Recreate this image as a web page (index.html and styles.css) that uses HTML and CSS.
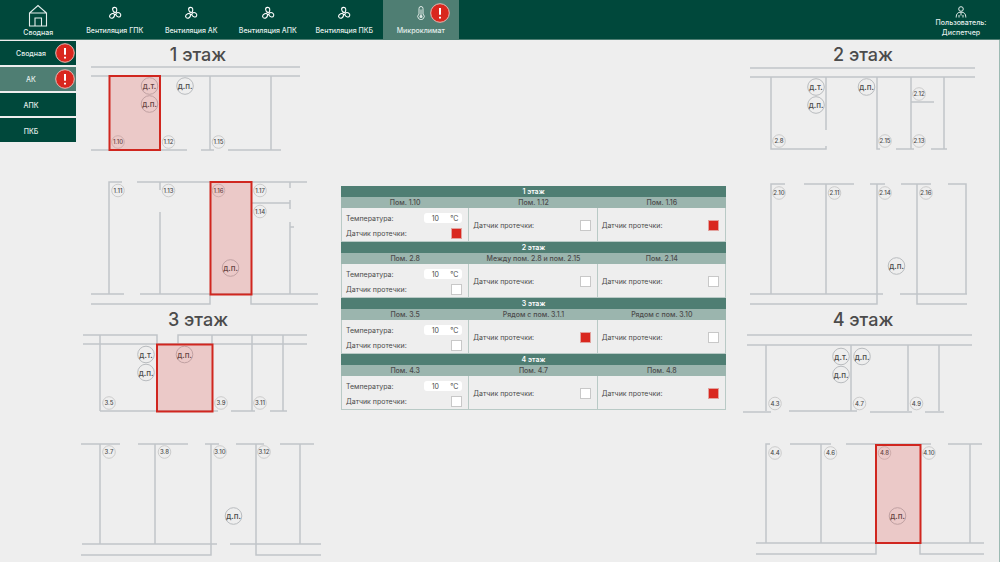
FILE: index.html
```html
<!DOCTYPE html>
<html lang="ru">
<head>
<meta charset="utf-8">
<title>Микроклимат — АК</title>
<link rel="stylesheet" href="styles.css">
</head>
<body>
<svg class="defs" aria-hidden="true">
  <symbol id="fan" viewBox="0 0 14 14">
    <g fill="none" stroke="#fff" stroke-width="1.1" stroke-linejoin="round">
      <circle cx="7" cy="7.4" r="1.2"/>
      <path d="M6.6 6.2C4.2 5.2 3.8 1.6 6.4 1.4C9 1.2 9.4 4 8 6.6"/>
      <path d="M8.2 7.2C10.4 5.6 13.4 7.2 12.7 9.6C12 12 8.8 11.2 7.6 8.6"/>
      <path d="M6.6 8.5C6.7 11.4 4 13.2 2.2 11.6C.4 9.8 2.6 7.4 5.8 7.2"/>
    </g>
  </symbol>
</svg>

<header class="topbar">
  <nav class="tabs">
    <button class="tab tab-home">
      <svg class="icon-home" viewBox="0 0 20 23"><path d="M1.5 22V9L10 1.5L18.500 9V22ZM1.5 9H18.500M7 22V14H13.500V22" fill="none" stroke="#e4eeec" stroke-width="1.1"/></svg>
      <span>Сводная</span>
    </button>
    <button class="tab"><svg class="icon"><use href="#fan"/></svg><span>Вентиляция ГПК</span></button>
    <button class="tab"><svg class="icon"><use href="#fan"/></svg><span>Вентиляция АК</span></button>
    <button class="tab"><svg class="icon"><use href="#fan"/></svg><span>Вентиляция АПК</span></button>
    <button class="tab"><svg class="icon"><use href="#fan"/></svg><span>Вентиляция ПКБ</span></button>
    <button class="tab active">
      <svg class="icon" viewBox="0 0 14 14"><path d="M5 8V2.500A2 2 0 0 1 9 2.500V8A3.200 3.200 0 1 1 5 8Z" fill="none" stroke="#dfeae7"/><path d="M7 3.500V10" stroke="#dfeae7" stroke-width="1"/><circle cx="7" cy="10.500" r="1.500" fill="#dfeae7"/></svg>
      <span>Микроклимат</span>
      <svg class="alarm alarm-tab" viewBox="0 0 20 20"><circle cx="10" cy="10" r="9.300"/><path d="M10 5V11.800M10 13.800V15.600"/></svg>
    </button>
  </nav>
  <div class="user">
    <svg class="icon-user" viewBox="0 0 12 12"><g fill="none" stroke="#e4eeec"><circle cx="6" cy="3" r="2.300"/><path d="M1.200 11.500C1.200 7.500 3 6.200 6 6.200S10.800 7.500 10.800 11.500M4 11.500V9M8 11.500V9M6 6.500V9.500"/></g></svg>
    <span>Пользователь:</span>
    <span>Диспетчер</span>
  </div>
</header>

<div class="page">
  <nav class="side">
    <button class="side-item">Сводная<svg class="alarm alarm-side" viewBox="0 0 20 20"><circle cx="10" cy="10" r="9.300"/><path d="M10 5V11.800M10 13.800V15.600"/></svg></button>
    <button class="side-item active">АК<svg class="alarm alarm-side" viewBox="0 0 20 20"><circle cx="10" cy="10" r="9.300"/><path d="M10 5V11.800M10 13.800V15.600"/></svg></button>
    <button class="side-item">АПК</button>
    <button class="side-item">ПКБ</button>
  </nav>

  <main class="main">
    <div class="plans plans-left">
      <section>
        <h2>1 этаж</h2>
        <svg class="plan" viewBox="77 66 264 239">
          <path class="wall" d="M91 67H300M91 76H300M210 76V150M271 76V150M91 150H187M201 150H214M228 150H281"/>
          <path class="wall" d="M122 182H109V294M137 182H307M160 182V190M160 212V294M290 182V188M290 200V209M290 222V294M290 227H294M251 203H290M91 294H124M140 294H318M91 304H210V294M251 294V304H318"/>
          <g class="sensor">
            <circle cx="149.500" cy="86" r="8.300"/><text x="149.500" y="89">д.т.</text>
            <circle cx="149.500" cy="104" r="8.300"/><text x="149.500" y="107">д.п.</text>
            <circle cx="185" cy="86" r="8.300"/><text x="185" y="89">д.п.</text>
            <circle cx="230.500" cy="268" r="8.300"/><text x="230.500" y="271">д.п.</text>
          </g>
          <g class="room">
            <circle cx="118" cy="142" r="6.300"/><text x="118" y="144">1.10</text>
            <circle cx="168.500" cy="142" r="6.300"/><text x="168.500" y="144">1.12</text>
            <circle cx="218.500" cy="142" r="6.300"/><text x="218.500" y="144">1.15</text>
            <circle cx="118" cy="190.500" r="6.300"/><text x="118" y="192.500">1.11</text>
            <circle cx="168.500" cy="190.500" r="6.300"/><text x="168.500" y="192.500">1.13</text>
            <circle cx="218.500" cy="190.500" r="6.300"/><text x="218.500" y="192.500">1.16</text>
            <circle cx="260" cy="190.500" r="6.300"/><text x="260" y="192.500">1.17</text>
            <circle cx="260" cy="211.500" r="6.300"/><text x="260" y="213.500">1.14</text>
          </g>
          <rect class="leak" x="109.500" y="76" width="50.500" height="74"/>
          <rect class="leak" x="210.500" y="182" width="41" height="112.500"/>
        </svg>
      </section>
      <section>
        <h2>3 этаж</h2>
        <svg class="plan" viewBox="77 331 264 231">
          <path class="wall" d="M83 335H157V344M178 344V335H307M83 344H307M100 335V411M212 335V344M252 335V411M283 335V411M100 411H218M231 411H255M270 411H287"/>
          <path class="wall" d="M81 444H120M138 444H188M205 444H219M236 444H264M280 444H314M100 444V544M155 444V544M300 444V544M82 544H217M230 544H321M81 555H211V444M256 444V555H321"/>
          <g class="sensor">
            <circle cx="146" cy="354.500" r="8.300"/><text x="146" y="357.500">д.т.</text>
            <circle cx="146" cy="372.500" r="8.300"/><text x="146" y="375.500">д.п.</text>
            <circle cx="184.500" cy="354.500" r="8.300"/><text x="184.500" y="357.500">д.п.</text>
            <circle cx="233.500" cy="516" r="8.300"/><text x="233.500" y="519">д.п.</text>
          </g>
          <g class="room">
            <circle cx="109" cy="403" r="6.300"/><text x="109" y="405">3.5</text>
            <circle cx="221" cy="403" r="6.300"/><text x="221" y="405">3.9</text>
            <circle cx="260" cy="403" r="6.300"/><text x="260" y="405">3.11</text>
            <circle cx="109" cy="452" r="6.300"/><text x="109" y="454">3.7</text>
            <circle cx="164.500" cy="452" r="6.300"/><text x="164.500" y="454">3.8</text>
            <circle cx="220" cy="452" r="6.300"/><text x="220" y="454">3.10</text>
            <circle cx="264" cy="452" r="6.300"/><text x="264" y="454">3.12</text>
          </g>
          <rect class="leak" x="157" y="344.500" width="55.500" height="67"/>
        </svg>
      </section>
    </div>

    <table class="status">
      <tbody>
        <tr class="floor"><th colspan="3">1 этаж</th></tr>
        <tr class="place"><th>Пом. 1.10</th><th>Пом. 1.12</th><th>Пом. 1.16</th></tr>
        <tr class="data">
          <td>
            <div class="line"><label for="t1">Температура:</label><span class="temp"><input id="t1" type="text" value="10"><span>°C</span></span></div>
            <div class="line"><label for="l1a">Датчик протечки:</label><input id="l1a" type="checkbox" checked></div>
          </td>
          <td><div class="line"><label for="l1b">Датчик протечки:</label><input id="l1b" type="checkbox"></div></td>
          <td><div class="line"><label for="l1c">Датчик протечки:</label><input id="l1c" type="checkbox" checked></div></td>
        </tr>
      </tbody>
      <tbody>
        <tr class="floor"><th colspan="3">2 этаж</th></tr>
        <tr class="place"><th>Пом. 2.8</th><th>Между пом. 2.8 и пом. 2.15</th><th>Пом. 2.14</th></tr>
        <tr class="data">
          <td>
            <div class="line"><label for="t2">Температура:</label><span class="temp"><input id="t2" type="text" value="10"><span>°C</span></span></div>
            <div class="line"><label for="l2a">Датчик протечки:</label><input id="l2a" type="checkbox"></div>
          </td>
          <td><div class="line"><label for="l2b">Датчик протечки:</label><input id="l2b" type="checkbox"></div></td>
          <td><div class="line"><label for="l2c">Датчик протечки:</label><input id="l2c" type="checkbox"></div></td>
        </tr>
      </tbody>
      <tbody>
        <tr class="floor"><th colspan="3">3 этаж</th></tr>
        <tr class="place"><th>Пом. 3.5</th><th>Рядом с пом. 3.1.1</th><th>Рядом с пом. 3.10</th></tr>
        <tr class="data">
          <td>
            <div class="line"><label for="t3">Температура:</label><span class="temp"><input id="t3" type="text" value="10"><span>°C</span></span></div>
            <div class="line"><label for="l3a">Датчик протечки:</label><input id="l3a" type="checkbox"></div>
          </td>
          <td><div class="line"><label for="l3b">Датчик протечки:</label><input id="l3b" type="checkbox" checked></div></td>
          <td><div class="line"><label for="l3c">Датчик протечки:</label><input id="l3c" type="checkbox"></div></td>
        </tr>
      </tbody>
      <tbody>
        <tr class="floor"><th colspan="3">4 этаж</th></tr>
        <tr class="place"><th>Пом. 4.3</th><th>Пом. 4.7</th><th>Пом. 4.8</th></tr>
        <tr class="data">
          <td>
            <div class="line"><label for="t4">Температура:</label><span class="temp"><input id="t4" type="text" value="10"><span>°C</span></span></div>
            <div class="line"><label for="l4a">Датчик протечки:</label><input id="l4a" type="checkbox"></div>
          </td>
          <td><div class="line"><label for="l4b">Датчик протечки:</label><input id="l4b" type="checkbox"></div></td>
          <td><div class="line"><label for="l4c">Датчик протечки:</label><input id="l4c" type="checkbox" checked></div></td>
        </tr>
      </tbody>
    </table>

    <div class="plans">
      <section>
        <h2>2 этаж</h2>
        <svg class="plan" viewBox="726 66 274 239">
          <path class="wall" d="M750 68H975M750 77H975M826 77V130M826 146V149H771V77M880 149H877V77M896 149H914M911 77V149M931 149H947M944 77V149M911 102H934"/>
          <path class="wall" d="M785 184H771V294M804 184H854M826 184V294M870 184H885M901 184H931M948 184H966V294M750 294H883M900 294H967M750 304H877V184M917 184V304H967"/>
          <g class="sensor">
            <circle cx="816" cy="87" r="8.300"/><text x="816" y="90">д.т.</text>
            <circle cx="816" cy="105" r="8.300"/><text x="816" y="108">д.п.</text>
            <circle cx="866.500" cy="87" r="8.300"/><text x="866.500" y="90">д.п.</text>
            <circle cx="896.500" cy="266" r="8.300"/><text x="896.500" y="269">д.п.</text>
          </g>
          <g class="room">
            <circle cx="779" cy="141" r="6.300"/><text x="779" y="143">2.8</text>
            <circle cx="885" cy="141" r="6.300"/><text x="885" y="143">2.15</text>
            <circle cx="919" cy="94" r="6.300"/><text x="919" y="96">2.12</text>
            <circle cx="919" cy="141" r="6.300"/><text x="919" y="143">2.13</text>
            <circle cx="779" cy="193" r="6.300"/><text x="779" y="195">2.10</text>
            <circle cx="834.500" cy="193" r="6.300"/><text x="834.500" y="195">2.11</text>
            <circle cx="885" cy="193" r="6.300"/><text x="885" y="195">2.14</text>
            <circle cx="926" cy="193" r="6.300"/><text x="926" y="195">2.16</text>
          </g>
        </svg>
      </section>
      <section>
        <h2>4 этаж</h2>
        <svg class="plan" viewBox="726 331 274 231">
          <path class="wall" d="M747 335H972M747 345H972M766 345V411M851 345V411M908 345V411M939 345V411M743 412H771M789 411H857M870 412H912M925 412H944"/>
          <path class="wall" d="M770 444H766V543M790 444H831M821 444V543M846 444H931M948 444H982M970 444V543M756 543H984M756 554H876V543M920 543V554H984"/>
          <g class="sensor">
            <circle cx="841" cy="356.500" r="8.300"/><text x="841" y="359.500">д.т.</text>
            <circle cx="862" cy="356.500" r="8.300"/><text x="862" y="359.500">д.п.</text>
            <circle cx="841" cy="374.500" r="8.300"/><text x="841" y="377.500">д.п.</text>
            <circle cx="897.500" cy="516" r="8.300"/><text x="897.500" y="519">д.п.</text>
          </g>
          <g class="room">
            <circle cx="775" cy="403.500" r="6.300"/><text x="775" y="405.500">4.3</text>
            <circle cx="859.500" cy="403.500" r="6.300"/><text x="859.500" y="405.500">4.7</text>
            <circle cx="916.500" cy="403.500" r="6.300"/><text x="916.500" y="405.500">4.9</text>
            <circle cx="775" cy="453" r="6.300"/><text x="775" y="455">4.4</text>
            <circle cx="830.500" cy="453" r="6.300"/><text x="830.500" y="455">4.6</text>
            <circle cx="884.500" cy="453" r="6.300"/><text x="884.500" y="455">4.8</text>
            <circle cx="929" cy="453" r="6.300"/><text x="929" y="455">4.10</text>
          </g>
          <rect class="leak" x="876" y="445" width="44.500" height="98"/>
        </svg>
      </section>
    </div>
  </main>
</div>
</body>
</html>
```

FILE: styles.css
```css
* {
  box-sizing: border-box;
}

body {
  margin: 0;
  min-height: 100vh;
  display: flex;
  flex-direction: column;
  background: #eeeeee;
  color: #4b4b4b;
  font-family: Inter, "Noto Sans", sans-serif;
  font-size: 7px;
}

button,
input {
  margin: 0;
  padding: 0;
  border: 0;
  font: inherit;
  color: inherit;
}

.defs {
  display: none;
}

/* Top bar */
.topbar {
  display: flex;
  justify-content: space-between;
  height: 40px;
  background: #00483b;
  color: #e4eeec;
  border-bottom: 1px solid #4f7e73;
  font-weight: 500;
}

.tabs {
  display: flex;
  width: 45.9%;
}

.tab {
  position: relative;
  flex: 1 1 0;
  min-width: 0;
  display: flex;
  flex-direction: column;
  align-items: center;
  gap: 6px;
  padding-top: 6px;
  background: none;
  line-height: 10px;
  white-space: nowrap;
}

.tab-home {
  gap: 1px;
  padding-top: 4px;
}

.tab.active,
.side-item.active {
  background: #4f7e73;
}

.icon {
  width: 14px;
  height: 14px;
}

.icon-home {
  width: 20px;
  height: 23px;
}

.icon-user {
  width: 12px;
  height: 12px;
}

.alarm {
  position: absolute;
  width: 20px;
  height: 20px;
  fill: #d9271e;
  stroke: #e9b8b3;
  stroke-width: 1;
}

.alarm path {
  stroke: #ffffff;
  stroke-width: 2;
}

.alarm-tab {
  top: 3px;
  right: 9px;
}

.alarm-side {
  top: 2px;
  right: 1px;
}

.user {
  display: flex;
  flex-direction: column;
  align-items: center;
  width: 78px;
  padding-top: 6px;
  line-height: 10px;
}

/* Side menu */
.page {
  flex: 1;
  display: grid;
  grid-template-columns: 77px minmax(0, 1fr);
}

.side {
  display: grid;
  grid-auto-rows: 1fr;
  gap: 2px;
  height: 102px;
  padding: 1px 1px 0 0;
}

.side-item {
  position: relative;
  padding: 2px 14px 0 0;
  background: #00483b;
  color: #e4eeec;
  font-weight: 500;
}

/* Floor plans and table */
.main {
  display: grid;
  grid-template-columns: minmax(0, 264fr) minmax(0, 385fr) minmax(0, 274fr);
  box-shadow: inset -1px 0 #9dbab3;
}

.plans-left h2 {
  padding-right: 22px;
}

h2 {
  margin: 0;
  padding-top: 4px;
  font-size: 18px;
  font-weight: 500;
  line-height: 22px;
  text-align: center;
}

.plan {
  display: block;
  width: 100%;
  overflow: visible;
}

.wall {
  fill: none;
  stroke: #c1c5c9;
  stroke-width: 1.5;
}

.sensor circle,
.room circle {
  fill: none;
  stroke: #b9bcbf;
}

.room circle {
  stroke: #cccccc;
}

.plan text {
  fill: #4b4b4b;
  font-weight: 500;
  text-anchor: middle;
}

.sensor text {
  font-size: 8px;
}

.room text {
  font-size: 6px;
}

.leak {
  fill: #dd2a2530;
  stroke: #d0261f;
  stroke-width: 2;
}

/* Status table */
.status {
  align-self: center;
  width: 100%;
  margin-bottom: 6px;
  border-collapse: separate;
  border-spacing: 0;
  table-layout: fixed;
}

.status th,
.status td {
  padding: 0;
}

.floor th {
  height: 11px;
  background: #4f7e73;
  color: #ffffff;
  font-weight: 600;
  line-height: 11px;
}

.place th {
  height: 11px;
  background: #9bb5ae;
  font-weight: 500;
  line-height: 11px;
}

.status .data td {
  height: 34px;
  padding: 2px 6px 0 4px;
  border: 1px solid #b9cac6;
  border-width: 0 1px 1px 0;
}

.status .data td:first-child {
  border-left-width: 1px;
}

.line {
  display: flex;
  align-items: center;
  justify-content: space-between;
  height: 15px;
}

.temp {
  display: flex;
  align-items: center;
  width: 38px;
  height: 10px;
  border-radius: 3px;
  background: #ffffff;
}

.temp input {
  width: 22px;
  height: 10px;
  background: none;
  text-align: center;
}

.temp span {
  flex: 1;
  text-align: center;
}

.line input[type="checkbox"] {
  appearance: none;
  width: 11px;
  height: 11px;
  border: 1px solid #c8c8c8;
  background: #ffffff;
}

.line input[type="checkbox"]:checked {
  border-color: #e2a29e;
  background: #d9271e;
}
```
